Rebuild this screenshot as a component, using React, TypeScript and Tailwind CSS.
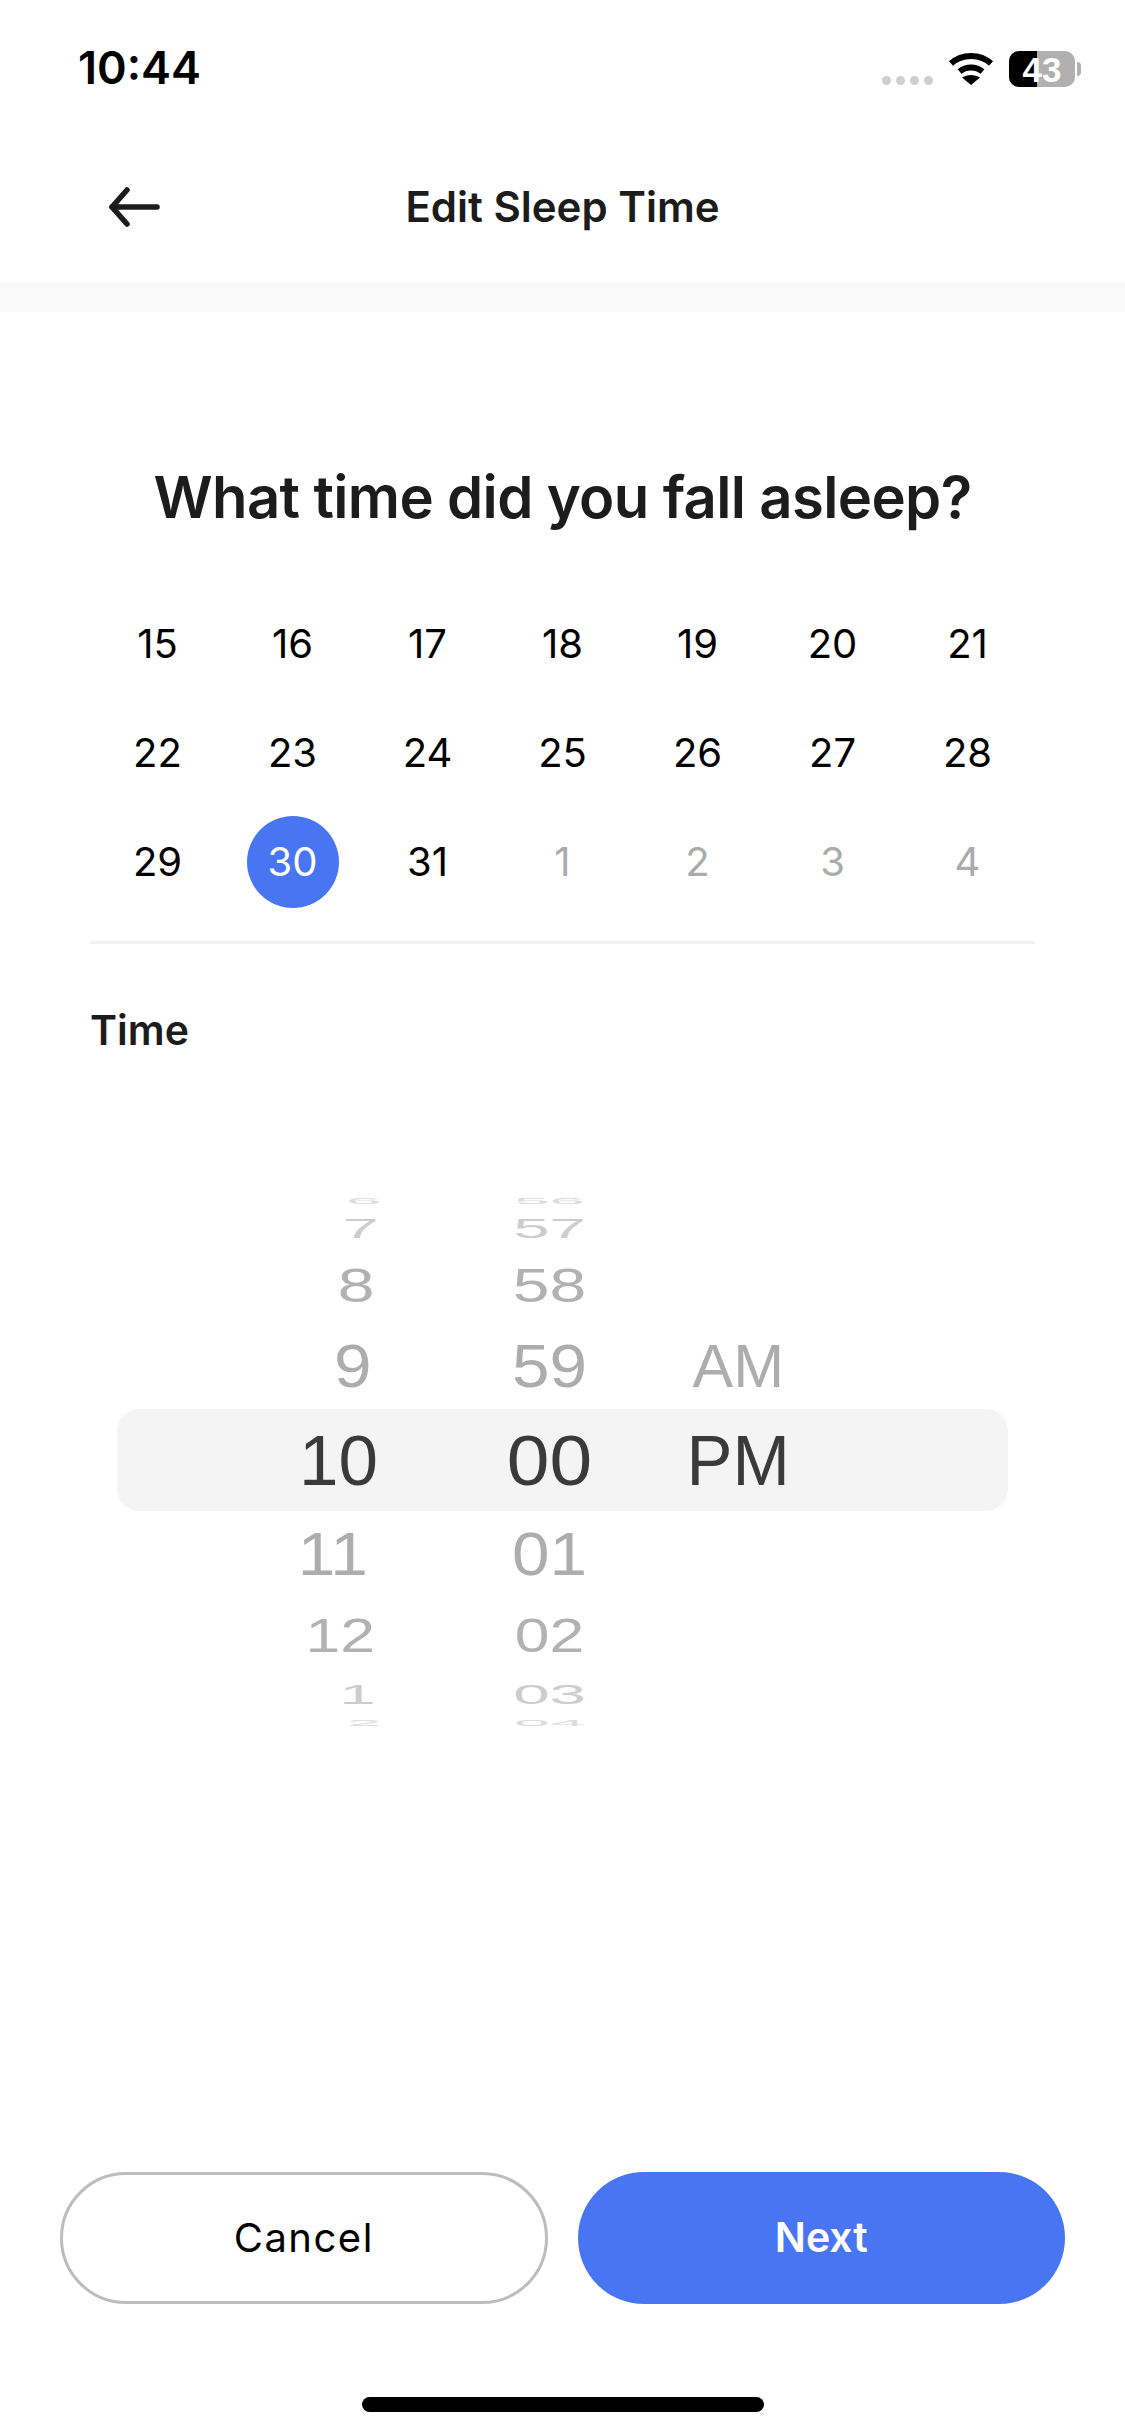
const DAYS = [
  [15, 16, 17, 18, 19, 20, 21],
  [22, 23, 24, 25, 26, 27, 28],
  [29, 30, 31, 1, 2, 3, 4],
];

// one row per wheel position; heights and scales fake the iOS drum perspective
const WHEEL_ROWS = [
  { height: 'h-[20px]', scale: 'scale-x-[.9] scale-y-[.125]', periodScale: '', color: 'text-[#dcdcdc]', hour: '6', minute: '56', period: '', shift: 'translate-x-[1px]' },
  { height: 'h-[36px]', scale: 'scale-x-[.92] scale-y-[.4]', periodScale: '', color: 'text-[#cdcdcd]', hour: '7', minute: '57', period: '', shift: '-translate-x-[2px]' },
  { height: 'h-[78px]', scale: 'scale-x-[.93] scale-y-[.67]', periodScale: '', color: 'text-[#b2b2b2]', hour: '8', minute: '58', period: '', shift: '-translate-x-[6px]' },
  { height: 'h-[84px]', scale: 'scale-x-[.95] scale-y-[.85]', periodScale: 'scale-x-[.86] scale-y-[.85]', color: 'text-[#adadad]', hour: '9', minute: '59', period: 'AM', shift: '-translate-x-[9px]' },
  { height: 'h-[104px]', scale: '', periodScale: 'scale-x-[.97]', color: 'text-[#3a3a3a]', hour: '10', minute: '00', period: 'PM', shift: '-translate-x-[2px]' },
  { height: 'h-[84px]', scale: 'scale-x-[.95] scale-y-[.85]', periodScale: '', color: 'text-[#adadad]', hour: '11', minute: '01', period: '', shift: '-translate-x-[12px]' },
  { height: 'h-[78px]', scale: 'scale-x-[.88] scale-y-[.67]', periodScale: '', color: 'text-[#b2b2b2]', hour: '12', minute: '02', period: '', shift: '-translate-x-[5px]' },
  { height: 'h-[40px]', scale: 'scale-x-[.92] scale-y-[.4]', periodScale: '', color: 'text-[#cdcdcd]', hour: '1', minute: '03', period: '', shift: '-translate-x-[5px]' },
  { height: 'h-[16px]', scale: 'scale-x-[.9] scale-y-[.125]', periodScale: '', color: 'text-[#dcdcdc]', hour: '2', minute: '04', period: '', shift: 'translate-x-[1px]' },
];

export default function App() {
  return (
    <div className="flex flex-col w-[1125px] h-[2436px] bg-white overflow-hidden font-['Inter',sans-serif]">
      <StatusBar />

      {/* Header */}
      <div className="shrink-0 h-[150px] grid grid-cols-[1fr_auto_1fr] items-center">
        <div className="pl-[105px]">
          <svg width="60" height="44" viewBox="0 0 60 44" fill="none" stroke="#1c1c1c" strokeWidth="5.5" strokeLinecap="round" strokeLinejoin="round">
            <path d="M52 22H7" />
            <path d="M22 5L7 22L22 39" />
          </svg>
        </div>
        <h2 className="text-[42px] leading-[50px] font-semibold text-[#1c1c1c]">Edit Sleep Time</h2>
        <div />
      </div>
      <div className="shrink-0 h-[30px] bg-[#f9f9f9]" />

      {/* Date */}
      <div className="flex-1 flex flex-col px-[90px]">
        <h1 className="mt-[149px] text-center text-[58px] leading-[72px] tracking-[-0.63px] font-semibold text-[#1c1c1c]">What time did you fall asleep?</h1>
        <div className="mt-[56px] grid grid-cols-7">
          {DAYS.flat().map((day, i) => (
            <DayCell key={i} day={day} muted={i > 16} selected={i === 15} />
          ))}
        </div>
        <div className="mt-[25px] h-[3px] bg-[#f1f1f1]" />
        <p className="mt-[61px] text-[41px] leading-[50px] font-semibold text-[#1c1c1c]">Time</p>

        <TimeWheel />
      </div>

      {/* Actions */}
      <div className="shrink-0 grid grid-cols-2 gap-[30px] px-[60px]">
        <button className="h-[132px] rounded-full border-[3px] border-[#bdbdbd] bg-white text-[40px] tracking-[1.5px] text-black">Cancel</button>
        <button className="h-[132px] rounded-full bg-[#4876f3] text-[41px] font-semibold text-white">Next</button>
      </div>
      <div className="shrink-0 h-[132px] flex items-end justify-center pb-[24px]">
        <div className="w-[402px] h-[15px] rounded-full bg-black" />
      </div>
    </div>
  );
}

function StatusBar() {
  return (
    <div className="shrink-0 h-[132px] flex items-start justify-between pl-[78px] pr-[44px]">
      <span className="mt-[41px] text-[45px] leading-[54px] font-semibold text-black">10:44</span>
      <div className="flex items-start mt-[51px]">
        <div className="flex gap-[5px] mt-[25px]">
          <span className="w-[9px] h-[9px] rounded-full bg-[#cfcfcf]" />
          <span className="w-[9px] h-[9px] rounded-full bg-[#cfcfcf]" />
          <span className="w-[9px] h-[9px] rounded-full bg-[#cfcfcf]" />
          <span className="w-[9px] h-[9px] rounded-full bg-[#cfcfcf]" />
        </div>
        <svg className="ml-[15px] mt-[1px]" width="46" height="34" viewBox="0 0 46 34" fill="none">
          <path d="M3 11.5C14 1.5 32 1.5 43 11.5" stroke="#000" strokeWidth="6" />
          <path d="M11.5 19.5C18 14 28 14 34.5 19.5" stroke="#000" strokeWidth="6" />
          <path d="M23 33L14 25.5C19 22 27 22 32 25.5Z" fill="#000" />
        </svg>
        <div className="relative ml-[15px] w-[66px] h-[36px] rounded-[10px] overflow-hidden bg-[#b0b0b0]">
          <div className="absolute inset-y-0 left-0 w-[28px] bg-black" />
          <span className="absolute inset-0 flex items-center justify-center text-[35px] leading-none font-semibold text-white font-['Liberation_Sans',sans-serif]">43</span>
        </div>
        <div className="ml-[2px] mt-[11px] w-[4px] h-[14px] rounded-r-full bg-[#b0b0b0]" />
      </div>
    </div>
  );
}

function DayCell({ day, muted, selected }: { day: number; muted: boolean; selected: boolean }) {
  return (
    <div className="h-[109px] flex items-center justify-center">
      {selected ? (
        <div className="w-[92px] h-[92px] rounded-full bg-[#4876f3] flex items-center justify-center text-[40px] text-white">{day}</div>
      ) : (
        <span className={muted ? 'text-[40px] text-[#ababab]' : 'text-[40px] text-black'}>{day}</span>
      )}
    </div>
  );
}

function TimeWheel() {
  return (
    <div className="relative mt-[135px] -mx-[90px] pl-[117px] font-['Liberation_Sans',sans-serif]">
      <div className="absolute left-[117px] top-[219px] w-[891px] h-[102px] rounded-[22px] bg-[#f4f4f4]" />
      <div className="relative flex flex-col w-[891px]">
        {WHEEL_ROWS.map((row) => (
          <div key={row.minute} className={`${row.height} flex items-center text-[71px] leading-none ${row.color}`}>
            <div className="w-[263px] flex justify-end">
              <span className={`${row.shift} ${row.scale} origin-right`}>{row.hour}</span>
            </div>
            <div className="w-[260px] pl-[78px] flex justify-center">
              <span className={row.minute === '00' ? 'scale-x-[1.08]' : row.scale}>{row.minute}</span>
            </div>
            <div className="w-[196px] flex justify-center">
              <span className={row.periodScale}>{row.period}</span>
            </div>
          </div>
        ))}
      </div>
    </div>
  );
}
